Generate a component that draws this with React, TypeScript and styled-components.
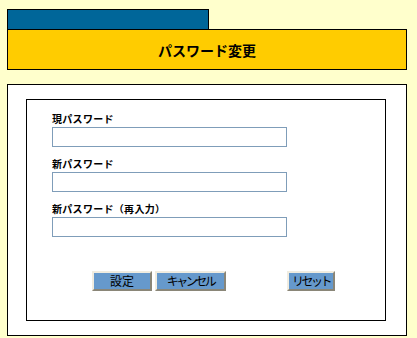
import React from 'react'
import styled, { createGlobalStyle } from 'styled-components'

const GlobalStyle = createGlobalStyle`
    html, body {
        margin: 0;
        padding: 0;
        background: #ffffcc;
    }
    body {
        font-family: "Noto Sans CJK JP", "DejaVu Sans", sans-serif;
        color: #000;
    }
`

const Pagina = styled.div`
    padding: 9px 0 0 7px;
    width: 400px;
`

const Aba = styled.div`
    width: 202px;
    height: 20px;
    box-sizing: border-box;
    background: #006699;
    border: 1px solid #000;
    border-bottom: none;
`

const Titulo = styled.h1`
    margin: 0;
    height: 41px;
    box-sizing: border-box;
    background: #ffcc00;
    border: 1px solid #000;
    display: flex;
    align-items: center;
    justify-content: center;
    font-size: 14px;
    font-weight: bold;
    line-height: 1;
    padding-top: 1px;
`

const CaixaExterna = styled.div`
    margin-top: 14px;
    height: 252px;
    box-sizing: border-box;
    background: #fff;
    border: 1px solid #000;
    padding: 14px 20px 14px 18px;
`

const CaixaInterna = styled.form`
    height: 222px;
    box-sizing: border-box;
    border: 1px solid #000;
    padding: 12px 0 0 25px;
    display: flex;
    flex-direction: column;
    gap: 10px;
`

const Campo = styled.div`
    display: flex;
    flex-direction: column;
`

const Rotulo = styled.label`
    font-size: 10px;
    font-weight: bold;
    line-height: 13px;
    height: 13px;
    margin-bottom: 2px;
    letter-spacing: 0.3px;
`

const Entrada = styled.input`
    width: 235px;
    height: 20px;
    box-sizing: border-box;
    border: 1px solid #7f9db9;
    background: #fff;
    padding: 0 3px;
    outline: none;
`

const Botoes = styled.div`
    display: flex;
    margin-top: 24px;
    padding-left: 40px;
`

const Botao = styled.button<{ $largura: number; $afastado?: boolean; $apertado?: boolean }>`
    width: ${p => p.$largura}px;
    height: 20px;
    box-sizing: border-box;
    margin-left: ${p => (p.$afastado ? 58 : 0)}px;
    margin-right: 3px;
    padding: 0;
    background: #6699cc;
    border: 2px solid;
    border-color: #f0ece0 #8a8678 #8a8678 #f0ece0;
    font-family: "Noto Sans CJK JP", sans-serif;
    font-size: 12px;
    line-height: 16px;
    letter-spacing: ${p => (p.$apertado ? -2.5 : 0)}px;
    color: #000;
    display: flex;
    align-items: center;
    justify-content: center;
    white-space: nowrap;
`

const campos = ['現パスワード', '新パスワード', '新パスワード（再入力）']

const App = () => {
    return <>
        <GlobalStyle />
        <Pagina>
            <Aba />
            <Titulo>パスワード変更</Titulo>
            <CaixaExterna>
                <CaixaInterna onSubmit={e => e.preventDefault()}>
                    {campos.map(rotulo =>
                        <Campo key={rotulo}>
                            <Rotulo>{rotulo}</Rotulo>
                            <Entrada type="password" />
                        </Campo>
                    )}
                    <Botoes>
                        <Botao $largura={60} type="submit">設定</Botao>
                        <Botao $largura={71} $apertado type="button">キャンセル</Botao>
                        <Botao $largura={48} $afastado $apertado type="reset">リセット</Botao>
                    </Botoes>
                </CaixaInterna>
            </CaixaExterna>
        </Pagina>
    </>
}

export default App
